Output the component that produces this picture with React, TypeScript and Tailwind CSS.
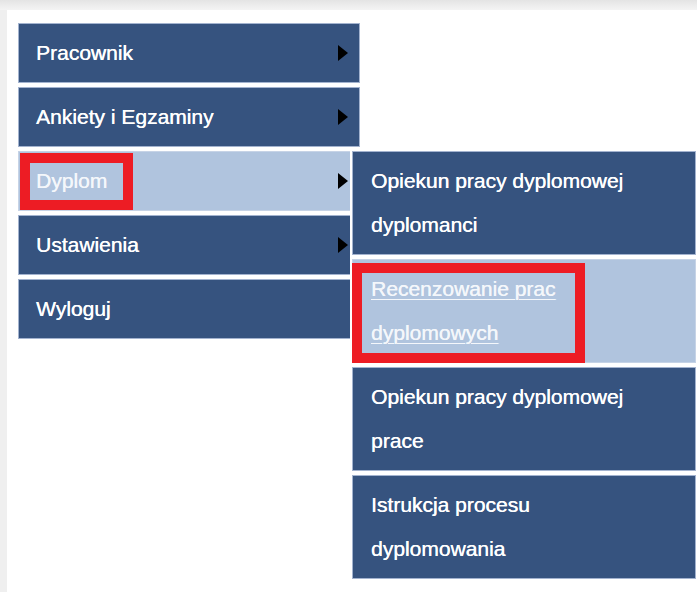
import React from "react";

type SubItem = { lines: string[]; active?: boolean };

const mainItems = [
  { label: "Pracownik", arrow: true },
  { label: "Ankiety i Egzaminy", arrow: true },
  { label: "Dyplom", arrow: true, active: true },
  { label: "Ustawienia", arrow: true },
  { label: "Wyloguj", arrow: false },
];

const subItems: SubItem[] = [
  { lines: ["Opiekun pracy dyplomowej", "dyplomanci"] },
  { lines: ["Recenzowanie prac", "dyplomowych"], active: true },
  { lines: ["Opiekun pracy dyplomowej", "prace"] },
  { lines: ["Istrukcja procesu", "dyplomowania"] },
];

function Arrow() {
  return (
    <svg width="10" height="16" viewBox="0 0 10 16" className="shrink-0">
      <polygon points="0,0 10,8 0,16" fill="#000" />
    </svg>
  );
}

export default function App() {
  return (
    <div className="w-[697px] h-[592px] overflow-hidden flex flex-col bg-[#efefef] font-['Liberation_Sans',Arial,sans-serif] text-[21px] leading-[44px] [text-shadow:0.35px_0_0_currentColor]">
      <div className="h-[10px] shrink-0 bg-gradient-to-b from-[#e4e4e4] to-[#f4f4f4]" />
      <div className="flex flex-1">
        <div className="w-[7px] shrink-0 bg-[#efefef]" />
        <div className="relative flex-1 bg-white pl-[11px] pt-[13px]">
          <ul className="w-[342px] flex flex-col gap-[4px]">
            {mainItems.map((it) => (
              <li
                key={it.label}
                className={
                  it.active
                    ? "relative flex items-center justify-between border border-[#c6d3e6] bg-[#b0c4de] pl-[17px] pr-[11px] py-[7px] text-[#f4f7fb]"
                    : "relative flex items-center justify-between border border-[#a3b3cf] bg-[#36537f] pl-[17px] pr-[11px] py-[7px] text-white"
                }
              >
                <span>{it.label}</span>
                {it.arrow && <Arrow />}
                {it.active && (
                  <div className="absolute left-[1px] top-[1px] w-[113px] h-[57px] border-[10px] border-[#ed1c24]" />
                )}
              </li>
            ))}
          </ul>

          {/* flyout submenu for Dyplom */}
          <ul className="absolute left-[343px] top-[139px] w-[348px] flex flex-col gap-[4px] border-2 border-white bg-white">
            {subItems.map((it, i) => (
              <li
                key={i}
                className={
                  it.active
                    ? "relative border border-[#c6d3e6] bg-[#b0c4de] pl-[18px] py-[7px] text-[#f4f7fb]"
                    : "relative border border-[#a3b3cf] bg-[#36537f] pl-[18px] py-[7px] text-white"
                }
              >
                {it.active && (
                  <div className="absolute left-[-1px] top-[3px] w-[233px] h-[100px] border-[10px] border-[#ed1c24]" />
                )}
                {it.lines.map((l) => (
                  <div key={l} className="relative">
                    {it.active ? <span className="underline underline-offset-[3px] decoration-1">{l}</span> : l}
                  </div>
                ))}
              </li>
            ))}
          </ul>
        </div>
      </div>
    </div>
  );
}
